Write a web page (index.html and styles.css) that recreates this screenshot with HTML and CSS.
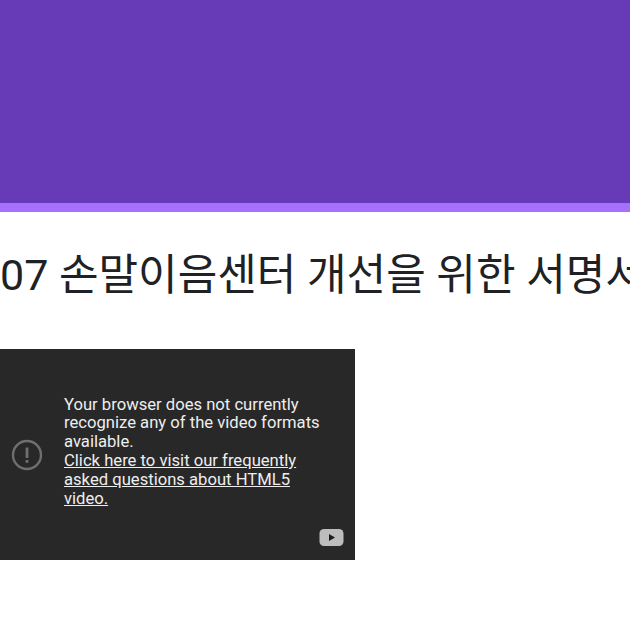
FILE: index.html
```html
<!DOCTYPE html>
<html lang="ko">
<head>
<meta charset="utf-8">
<title>07 손말이음센터 개선을 위한 서명서</title>
<link rel="stylesheet" href="styles.css">
</head>
<body>
<header class="banner"></header>
<div class="band"></div>
<h1 class="title">07 손말이음센터 개선을 위한 서명서</h1>
<section class="video">
  <svg class="alert" viewBox="0 0 32 32" aria-hidden="true">
    <circle cx="16" cy="16" r="14" fill="none" stroke="currentColor" stroke-width="2.4"/>
    <rect x="14.6" y="8.5" width="2.8" height="10.5" fill="currentColor"/>
    <rect x="14.6" y="21" width="2.8" height="2.8" fill="currentColor"/>
  </svg>
  <div class="message">
    Your browser does not currently recognize any of the video formats available.<br>
    <a href="#">Click here to visit our frequently asked questions about HTML5 video.</a>
  </div>
  <svg class="yt" viewBox="0 0 24 17" aria-hidden="true">
    <rect width="24" height="17" rx="4.5" fill="#bdbdbd"/>
    <path d="M9.500 5v7l6-3.500z" fill="#1c1c1c"/>
  </svg>
</section>
</body>
</html>
```
FILE: styles.css
```css
html, body { margin: 0; padding: 0; background: #fff; overflow: hidden; }
body { width: 630px; height: 630px; font-family: Roboto, "Noto Sans CJK KR", sans-serif; }
.banner { height: 203px; background: #673ab7; }
.band { height: 9px; background: #a66ffe; }
.title {
  margin: 38px 0 0;
  font-family: Roboto, "Noto Sans CJK KR", sans-serif;
  font-size: 43px;
  line-height: 50px;
  font-weight: 400;
  color: #202124;
  white-space: nowrap;
  overflow: hidden;
}
.video {
  position: relative;
  margin-top: 49px;
  width: 355px;
  height: 211px;
  background: #282828;
  display: flex;
  align-items: center;
  box-sizing: border-box;
}
.alert { width: 32px; height: 32px; margin-left: 11px; color: #6f6f6f; flex: none; }
.message {
  margin-left: 21px;
  margin-bottom: 5px;
  width: 265px;
  color: #eee;
  font-size: 16.64px;
  line-height: 18.8px;
}
.message a { color: #eee; text-decoration: underline; }
.yt { position: absolute; right: 11px; bottom: 14px; width: 25px; height: 17px; }
```
